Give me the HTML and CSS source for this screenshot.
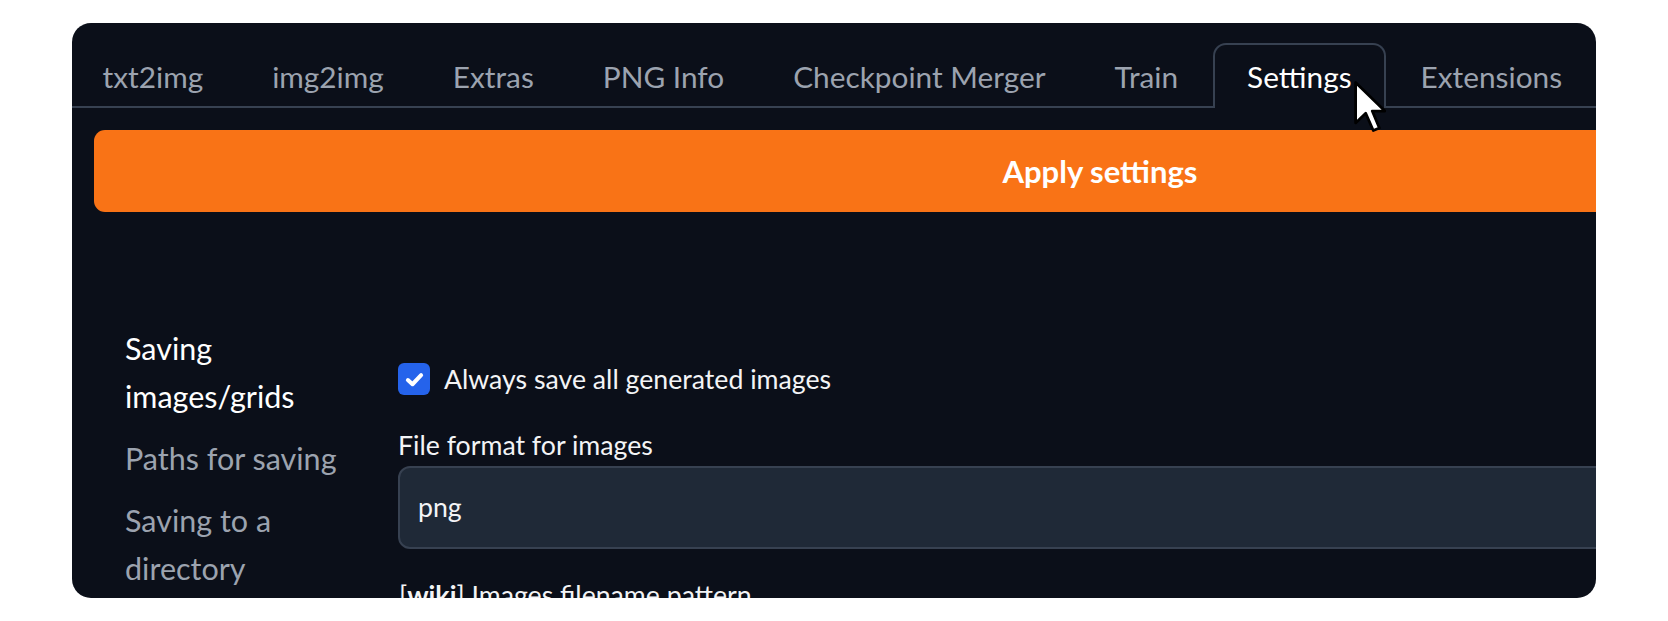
FILE: index.html
```html
<!DOCTYPE html>
<html lang="en">
<head>
<meta charset="utf-8">
<title>Settings</title>
<link rel="stylesheet" href="styles.css">
</head>
<body>
<div class="page">
  <div class="panel">
    <div class="tabs">
      <div class="tab">txt2img</div>
      <div class="tab">img2img</div>
      <div class="tab">Extras</div>
      <div class="tab">PNG Info</div>
      <div class="tab">Checkpoint Merger</div>
      <div class="tab">Train</div>
      <div class="tab active">Settings<svg class="cursor" viewBox="0 0 13 21" width="33" height="53"><path d="M1 1 V17 L5 13.2 L8 20 L10.4 19 L7.6 12.3 H12.6 Z" fill="#fff" stroke="#000" stroke-width="1.1" stroke-linejoin="round"/></svg></div>
      <div class="tab">Extensions</div>
    </div>
    <div class="inner">
      <button class="apply">Apply settings</button>
      <div class="settings">
        <nav class="side">
          <div class="side-item active">Saving images/grids</div>
          <div class="side-item">Paths for saving</div>
          <div class="side-item">Saving to a directory</div>
        </nav>
        <div class="content">
          <label class="check">
            <span class="box"><svg viewBox="0 0 16 16" width="23" height="23"><path d="M3.4 8.4 L6.6 11.3 L12.6 5" fill="none" stroke="#fff" stroke-width="2.8" stroke-linecap="round" stroke-linejoin="round"/></svg></span>
            <span>Always save all generated images</span>
          </label>
          <div class="field-label">File format for images</div>
          <div class="input">png</div>
          <div class="field-label wiki">[<b>wiki</b>] Images filename pattern</div>
        </div>
      </div>
    </div>
  </div>
</div>
</body>
</html>
```
FILE: styles.css
```css
html, body {
  margin: 0;
  padding: 0;
  background: #ffffff;
}

body {
  font-family: Lato, "Noto Sans", sans-serif;
  color: #f3f4f6;
}

.page {
  padding: 23px 0 0 72px;
}

.panel {
  width: 1524px;
  height: 575px;
  background: #0b0f19;
  border-radius: 19px;
  overflow: hidden;
}

.tabs {
  display: flex;
  margin-left: -4px;
  padding-top: 20px;
  border-bottom: 2px solid #374151;
  height: 63px;
  white-space: nowrap;
}

.tab {
  position: relative;
  flex: none;
  height: 61px;
  line-height: 64px;
  padding: 0 32.5px;
  border: 2px solid transparent;
  border-bottom: none;
  border-radius: 13px 13px 0 0;
  font-size: 29.8px;
  color: #9ca3af;
}

.tab.active {
  color: #ffffff;
  border-color: #374151;
  background: #0b0f19;
  height: 63px;
}

.cursor {
  position: absolute;
  left: 138px;
  top: 35px;
}

.inner {
  margin-left: 22px;
  width: 2012px;
}

.apply {
  display: block;
  width: 100%;
  height: 82px;
  margin-top: 22px;
  border: none;
  border-radius: 11px;
  background: #f97316;
  color: #ffffff;
  font-family: Lato, "Noto Sans", sans-serif;
  font-weight: 700;
  font-size: 31px;
}

.settings {
  display: grid;
  grid-template-columns: 304px 1fr;
  margin-top: 105px;
}

.side {
  padding-left: 31px;
  padding-right: 43px;
}

.side-item {
  font-size: 30.5px;
  line-height: 48px;
  padding: 7px 0;
  color: #9ca3af;
}

.side-item.active {
  color: #ffffff;
}

.content {
  padding-top: 46px;
  font-size: 26.7px;
}

.check {
  display: flex;
  align-items: center;
  gap: 14px;
  height: 32px;
  line-height: 32px;
}

.box {
  width: 32px;
  height: 32px;
  border-radius: 6px;
  background: #2563eb;
  display: flex;
  align-items: center;
  justify-content: center;
}

.field-label {
  margin-top: 32px;
  line-height: 36px;
  color: #f3f4f6;
}

.input {
  margin-top: 3px;
  height: 79px;
  line-height: 79px;
  border: 2px solid #374151;
  border-radius: 12px;
  background: #1f2937;
  padding-left: 18px;
}

.field-label.wiki {
  margin-top: 28px;
  padding-left: 1px;
}

.field-label.wiki b {
  font-weight: 700;
}
```
